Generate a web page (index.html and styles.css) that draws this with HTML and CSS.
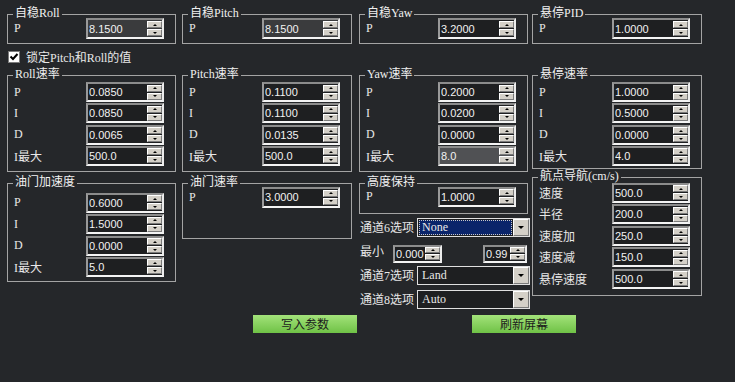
FILE: index.html
```html
<!DOCTYPE html>
<html lang="zh">
<head>
  <meta charset="UTF-8">
  <title>参数设置</title>
  <link rel="stylesheet" href="styles.css">
</head>
<body>
<div class="panel">
  <div class="columns">
    <!-- 第一列 -->
    <div class="col col-1">
      <div class="group g-top">
        <div class="title">自稳Roll</div>
        <div class="row"><span class="lbl">P</span><span class="spin gray"><span class="val">8.1500</span><span class="arrows"><i class="up"></i><i class="dn"></i></span></span></div>
      </div>
      <div class="check"><span class="box"><svg width="10" height="10" viewBox="0 0 10 10"><path d="M1.5 4.5 L4 7 L8.5 2" fill="none" stroke="#000" stroke-width="2"/></svg></span><span>锁定Pitch和Roll的值</span></div>
      <div class="group g-rate g-rate-1">
        <div class="title">Roll速率</div>
        <div class="rows">
          <div class="row"><span class="lbl">P</span><span class="spin"><span class="val">0.0850</span><span class="arrows"><i class="up"></i><i class="dn"></i></span></span></div>
          <div class="row"><span class="lbl">I</span><span class="spin"><span class="val">0.0850</span><span class="arrows"><i class="up"></i><i class="dn"></i></span></span></div>
          <div class="row"><span class="lbl">D</span><span class="spin"><span class="val">0.0065</span><span class="arrows"><i class="up"></i><i class="dn"></i></span></span></div>
          <div class="row"><span class="lbl">I最大</span><span class="spin"><span class="val">500.0</span><span class="arrows"><i class="up"></i><i class="dn"></i></span></span></div>
        </div>
      </div>
      <div class="group g-accel">
        <div class="title">油门加速度</div>
        <div class="rows">
          <div class="row"><span class="lbl">P</span><span class="spin"><span class="val">0.6000</span><span class="arrows"><i class="up"></i><i class="dn"></i></span></span></div>
          <div class="row"><span class="lbl">I</span><span class="spin"><span class="val">1.5000</span><span class="arrows"><i class="up"></i><i class="dn"></i></span></span></div>
          <div class="row"><span class="lbl">D</span><span class="spin"><span class="val">0.0000</span><span class="arrows"><i class="up"></i><i class="dn"></i></span></span></div>
          <div class="row"><span class="lbl">I最大</span><span class="spin"><span class="val">5.0</span><span class="arrows"><i class="up"></i><i class="dn"></i></span></span></div>
        </div>
      </div>
    </div>

    <!-- 第二列 -->
    <div class="col col-2">
      <div class="group g-top">
        <div class="title">自稳Pitch</div>
        <div class="row"><span class="lbl">P</span><span class="spin gray"><span class="val">8.1500</span><span class="arrows"><i class="up"></i><i class="dn"></i></span></span></div>
      </div>
      <div class="group g-rate">
        <div class="title">Pitch速率</div>
        <div class="rows">
          <div class="row"><span class="lbl">P</span><span class="spin"><span class="val">0.1100</span><span class="arrows"><i class="up"></i><i class="dn"></i></span></span></div>
          <div class="row"><span class="lbl">I</span><span class="spin"><span class="val">0.1100</span><span class="arrows"><i class="up"></i><i class="dn"></i></span></span></div>
          <div class="row"><span class="lbl">D</span><span class="spin"><span class="val">0.0135</span><span class="arrows"><i class="up"></i><i class="dn"></i></span></span></div>
          <div class="row"><span class="lbl">I最大</span><span class="spin"><span class="val">500.0</span><span class="arrows"><i class="up"></i><i class="dn"></i></span></span></div>
        </div>
      </div>
      <div class="group g-throttle">
        <div class="title">油门速率</div>
        <div class="row"><span class="lbl">P</span><span class="spin"><span class="val">3.0000</span><span class="arrows"><i class="up"></i><i class="dn"></i></span></span></div>
      </div>
    </div>

    <!-- 第三列 -->
    <div class="col col-3">
      <div class="group g-top">
        <div class="title">自稳Yaw</div>
        <div class="row"><span class="lbl">P</span><span class="spin"><span class="val">3.2000</span><span class="arrows"><i class="up"></i><i class="dn"></i></span></span></div>
      </div>
      <div class="group g-rate">
        <div class="title">Yaw速率</div>
        <div class="rows">
          <div class="row"><span class="lbl">P</span><span class="spin"><span class="val">0.2000</span><span class="arrows"><i class="up"></i><i class="dn"></i></span></span></div>
          <div class="row"><span class="lbl">I</span><span class="spin"><span class="val">0.0200</span><span class="arrows"><i class="up"></i><i class="dn"></i></span></span></div>
          <div class="row"><span class="lbl">D</span><span class="spin"><span class="val">0.0000</span><span class="arrows"><i class="up"></i><i class="dn"></i></span></span></div>
          <div class="row"><span class="lbl">I最大</span><span class="spin light"><span class="val">8.0</span><span class="arrows"><i class="up"></i><i class="dn"></i></span></span></div>
        </div>
      </div>
      <div class="group g-alt">
        <div class="title">高度保持</div>
        <div class="row"><span class="lbl">P</span><span class="spin"><span class="val">1.0000</span><span class="arrows"><i class="up"></i><i class="dn"></i></span></span></div>
      </div>
      <div class="combo-row ch6">
        <span class="clbl">通道6选项</span>
        <span class="combo focus"><span class="ctext"><span class="sel">None</span></span><span class="drop"></span></span>
      </div>
      <div class="min-row">
        <span class="mlbl">最小</span>
        <span class="spin small s-min"><span class="val">0.000</span><span class="arrows"><i class="up"></i><i class="dn"></i></span></span>
        <span class="spin small s-max"><span class="val">0.99</span><span class="arrows"><i class="up"></i><i class="dn"></i></span></span>
      </div>
      <div class="combo-row ch7">
        <span class="clbl">通道7选项</span>
        <span class="combo"><span class="ctext">Land</span><span class="drop"></span></span>
      </div>
      <div class="combo-row ch8">
        <span class="clbl">通道8选项</span>
        <span class="combo"><span class="ctext">Auto</span><span class="drop"></span></span>
      </div>
    </div>

    <!-- 第四列 -->
    <div class="col col-4">
      <div class="group g-top">
        <div class="title">悬停PID</div>
        <div class="row"><span class="lbl">P</span><span class="spin"><span class="val">1.0000</span><span class="arrows"><i class="up"></i><i class="dn"></i></span></span></div>
      </div>
      <div class="group g-rate g-hover">
        <div class="title">悬停速率</div>
        <div class="rows">
          <div class="row"><span class="lbl">P</span><span class="spin"><span class="val">1.0000</span><span class="arrows"><i class="up"></i><i class="dn"></i></span></span></div>
          <div class="row"><span class="lbl">I</span><span class="spin"><span class="val">0.5000</span><span class="arrows"><i class="up"></i><i class="dn"></i></span></span></div>
          <div class="row"><span class="lbl">D</span><span class="spin"><span class="val">0.0000</span><span class="arrows"><i class="up"></i><i class="dn"></i></span></span></div>
          <div class="row"><span class="lbl">I最大</span><span class="spin"><span class="val">4.0</span><span class="arrows"><i class="up"></i><i class="dn"></i></span></span></div>
        </div>
      </div>
      <div class="group g-nav">
        <div class="title">航点导航(cm/s)</div>
        <div class="rows">
          <div class="row"><span class="lbl">速度</span><span class="spin"><span class="val">500.0</span><span class="arrows"><i class="up"></i><i class="dn"></i></span></span></div>
          <div class="row"><span class="lbl">半径</span><span class="spin"><span class="val">200.0</span><span class="arrows"><i class="up"></i><i class="dn"></i></span></span></div>
          <div class="row"><span class="lbl">速度加</span><span class="spin"><span class="val">250.0</span><span class="arrows"><i class="up"></i><i class="dn"></i></span></span></div>
          <div class="row"><span class="lbl">速度减</span><span class="spin"><span class="val">150.0</span><span class="arrows"><i class="up"></i><i class="dn"></i></span></span></div>
          <div class="row"><span class="lbl">悬停速度</span><span class="spin"><span class="val">500.0</span><span class="arrows"><i class="up"></i><i class="dn"></i></span></span></div>
        </div>
      </div>
    </div>
  </div>

  <div class="actions">
    <button class="btn">写入参数</button>
    <button class="btn">刷新屏幕</button>
  </div>
</div>
</body>
</html>
```

FILE: styles.css
```css
*{
  margin: 0;
  padding: 0;
  box-sizing: border-box;
}
body{
  background: #25272a;
  color: #e8e8e8;
  font: 12px "Liberation Serif", "Noto Sans CJK SC", serif;
  width: 735px;
  height: 382px;
  overflow: hidden;
}
.panel{
  height: 382px;
  padding-left: 7px;
}
.columns{
  display: flex;
  align-items: flex-start;
}
.col{
  display: flex;
  flex-direction: column;
}
.col-1{ width: 169px; }
.col-2{ width: 170px; margin-left: 6px; }
.col-3{ width: 169px; margin-left: 7px; }
.col-4{ width: 170px; margin-left: 4px; }

/* 分组框 */
.group{
  border: 1px solid #a4a4a4;
  padding: 0 11px 4px 6px;
}
.title{
  display: table;
  margin: -8px 0 0 -1px;
  padding: 0 2px;
  line-height: 12px;
  background: #25272a;
  color: #f0f0f0;
}
.row{
  display: flex;
  align-items: center;
  justify-content: space-between;
  height: 21px;
}
.rows{
  display: flex;
  flex-direction: column;
  gap: 1.33px;
  margin-top: 2px;
}
.rows .row{ height: 20px; }

.g-top{ margin-top: 14px; }
.g-top .row{ margin-top: -1px; }
.g-rate{ margin-top: 31px; padding-bottom: 5px; }
.g-rate-1{ margin-top: 12px; }
.g-accel{ margin-top: 11px; }
.g-accel .rows{ margin-top: 5px; }
.g-throttle{ margin-top: 11px; padding-bottom: 30px; }
.g-throttle .row{ margin-top: -1px; }
.g-alt{ margin-top: 11px; padding-bottom: 6px; }
.g-alt .row{ margin-top: -1px; height: 20px; }
.g-hover{ padding-bottom: 2px; }
.g-nav{ margin-top: 8px; padding-bottom: 6px; }
.g-nav .rows{ margin-top: 1px; gap: 1.5px; }

/* 复选框 */
.check{
  display: flex;
  align-items: center;
  gap: 6px;
  height: 12px;
  margin-top: 7px;
  padding-left: 1px;
}
.box{
  width: 12px;
  height: 12px;
  background: #fff;
  border: 1px solid #7c7c7c;
  display: flex;
  align-items: center;
  justify-content: center;
}

/* 数值框 */
.spin{
  width: 78px;
  height: 100%;
  display: flex;
  align-items: center;
  border: 2px solid;
  border-color: #8c8c8c #ececec #f4f4f4 #9a9a9a;
  background: #1e1f21;
  font: 11px "Liberation Sans", Arial, sans-serif;
  color: #f2f2f2;
  padding-left: 1px;
  flex-shrink: 0;
}
.spin.gray{ background: #3a3b3d; }
.spin.light{ background: #505154; }
.val{
  flex: 1;
  overflow: hidden;
  white-space: nowrap;
}
.arrows{
  display: flex;
  flex-direction: column;
  gap: 1px;
  width: 15px;
}
.arrows i{
  height: 7px;
  background: #d4d0c8;
  border: 1px solid;
  border-color: #ffffff #7a7a7a #7a7a7a #ffffff;
  display: flex;
  align-items: center;
  justify-content: center;
}
.arrows i::after{
  content: "";
  border-left: 2px solid transparent;
  border-right: 2px solid transparent;
}
.arrows .up::after{ border-bottom: 2px solid #000; }
.arrows .dn::after{ border-top: 2px solid #000; }

/* 下拉框 */
.combo-row{
  display: flex;
  align-items: center;
  height: 19px;
  width: 171px;
}
.ch6{ margin-top: 4px; }
.ch7{ margin-top: 3px; }
.ch8{ margin-top: 5px; }
.clbl{
  width: 58px;
  padding-left: 1px;
  flex-shrink: 0;
}
.combo{
  width: 113px;
  height: 19px;
  display: flex;
  border: 1px solid #e0e0e0;
  background: #1e1f21;
  flex-shrink: 0;
}
.ctext{
  flex: 1;
  padding-left: 4px;
  line-height: 17px;
}
.combo.focus .ctext{
  padding: 1px;
}
.sel{
  display: block;
  height: 100%;
  background: #0a246a;
  border: 1px dotted #c8c8c8;
  padding-left: 2px;
  line-height: 13px;
}
.drop{
  width: 16px;
  background: #d4d0c8;
  border: 1px solid;
  border-color: #ffffff #7a7a7a #7a7a7a #ffffff;
  display: flex;
  align-items: center;
  justify-content: center;
}
.drop::after{
  content: "";
  border-left: 3px solid transparent;
  border-right: 3px solid transparent;
  border-top: 3px solid #000;
}

.min-row{
  display: flex;
  align-items: center;
  height: 18px;
  margin-top: 8px;
}
.mlbl{
  width: 34px;
  padding-left: 1px;
  margin-top: -6px;
}
.spin.small{ height: 18px; }
.s-min{ width: 49px; }
.s-max{ width: 44px; margin-left: 41px; }
.spin.small .arrows i{ height: 6px; }

/* 按钮 */
.actions{
  display: flex;
  gap: 115px;
  padding-left: 246px;
  margin-top: 6px;
}
.btn{
  width: 104px;
  height: 18px;
  border: none;
  background: linear-gradient(#a3e27a, #6fc246);
  color: #1c1c1c;
  font: 12px "Noto Sans CJK SC", sans-serif;
  line-height: 18px;
}
```
